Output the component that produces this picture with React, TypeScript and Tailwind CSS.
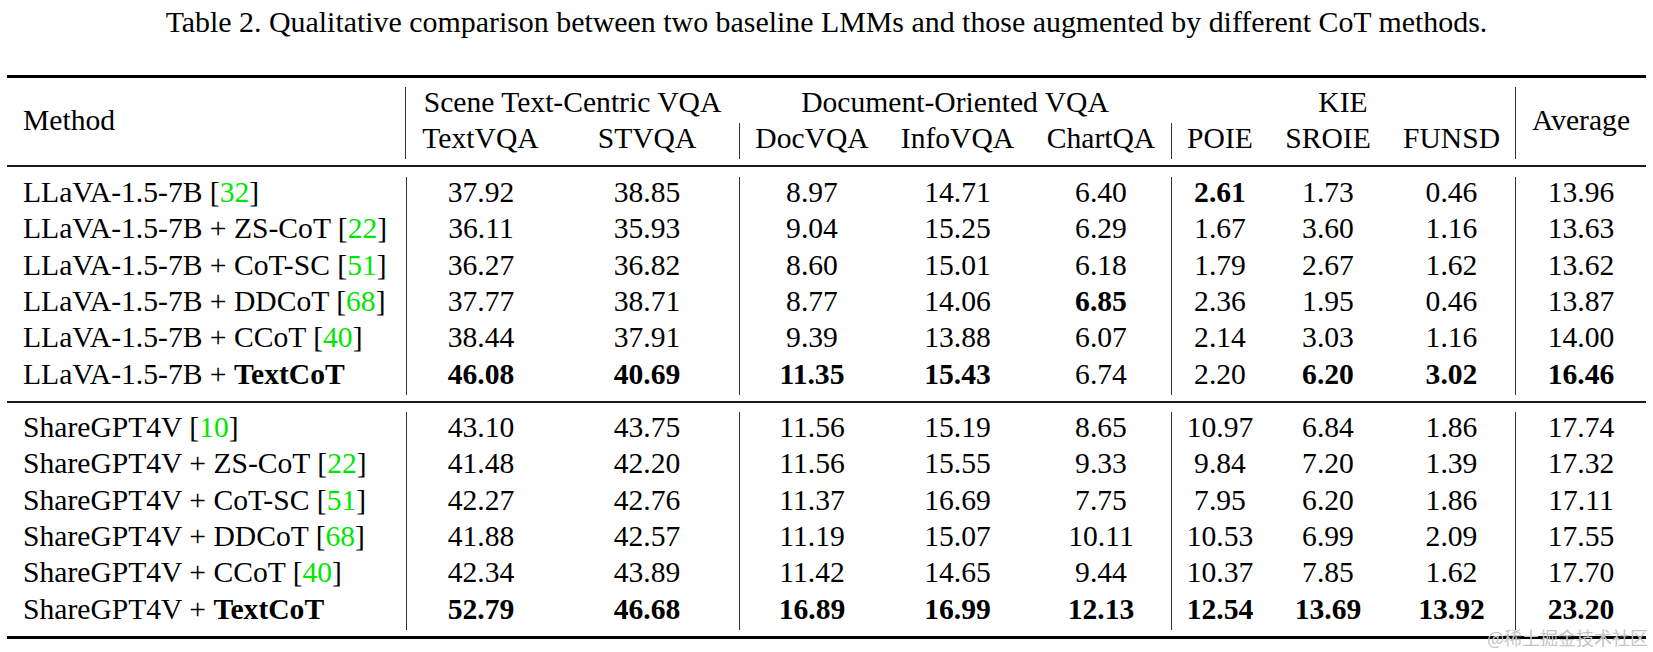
type Cell = string | { v: string; b?: boolean };

type Row = {
  base: string;
  plus?: string;
  cite?: string;
  boldName?: boolean;
  vals: Cell[];
};

const b = (v: string) => ({ v, b: true });

const llava: Row[] = [
  { base: 'LLaVA-1.5-7B', cite: '32', vals: ['37.92', '38.85', '8.97', '14.71', '6.40', b('2.61'), '1.73', '0.46', '13.96'] },
  { base: 'LLaVA-1.5-7B', plus: 'ZS-CoT', cite: '22', vals: ['36.11', '35.93', '9.04', '15.25', '6.29', '1.67', '3.60', '1.16', '13.63'] },
  { base: 'LLaVA-1.5-7B', plus: 'CoT-SC', cite: '51', vals: ['36.27', '36.82', '8.60', '15.01', '6.18', '1.79', '2.67', '1.62', '13.62'] },
  { base: 'LLaVA-1.5-7B', plus: 'DDCoT', cite: '68', vals: ['37.77', '38.71', '8.77', '14.06', b('6.85'), '2.36', '1.95', '0.46', '13.87'] },
  { base: 'LLaVA-1.5-7B', plus: 'CCoT', cite: '40', vals: ['38.44', '37.91', '9.39', '13.88', '6.07', '2.14', '3.03', '1.16', '14.00'] },
  {
    base: 'LLaVA-1.5-7B',
    plus: 'TextCoT',
    boldName: true,
    vals: [b('46.08'), b('40.69'), b('11.35'), b('15.43'), '6.74', '2.20', b('6.20'), b('3.02'), b('16.46')],
  },
];

const share: Row[] = [
  { base: 'ShareGPT4V', cite: '10', vals: ['43.10', '43.75', '11.56', '15.19', '8.65', '10.97', '6.84', '1.86', '17.74'] },
  { base: 'ShareGPT4V', plus: 'ZS-CoT', cite: '22', vals: ['41.48', '42.20', '11.56', '15.55', '9.33', '9.84', '7.20', '1.39', '17.32'] },
  { base: 'ShareGPT4V', plus: 'CoT-SC', cite: '51', vals: ['42.27', '42.76', '11.37', '16.69', '7.75', '7.95', '6.20', '1.86', '17.11'] },
  { base: 'ShareGPT4V', plus: 'DDCoT', cite: '68', vals: ['41.88', '42.57', '11.19', '15.07', '10.11', '10.53', '6.99', '2.09', '17.55'] },
  { base: 'ShareGPT4V', plus: 'CCoT', cite: '40', vals: ['42.34', '43.89', '11.42', '14.65', '9.44', '10.37', '7.85', '1.62', '17.70'] },
  {
    base: 'ShareGPT4V',
    plus: 'TextCoT',
    boldName: true,
    vals: [b('52.79'), b('46.68'), b('16.89'), b('16.99'), b('12.13'), b('12.54'), b('13.69'), b('13.92'), b('23.20')],
  },
];

// colonne che iniziano con il filetto verticale (indice nei valori)
const divided = [0, 2, 5, 8];

const grid =
  'grid grid-cols-[399px_149px_184px_145px_147px_140px_97px_120px_127px_131px]';

function MethodName({ row }: { row: Row }) {
  return (
    <div className="h-[36.33px] leading-[30px] pl-[16px] text-left whitespace-nowrap">
      {row.base}
      {row.plus && (
        <>
          {' + '}
          <span className={row.boldName ? 'font-bold' : ''}>{row.plus}</span>
        </>
      )}
      {row.cite && (
        <>
          {' ['}
          <span className="text-[#00e600]">{row.cite}</span>
          {']'}
        </>
      )}
    </div>
  );
}

function Block({ rows, last }: { rows: Row[]; last?: boolean }) {
  return (
    <div
      className={
        last
          ? 'pt-[9px] pb-[6px] border-b-[3px] border-black'
          : 'pt-[10px] pb-[6px] border-b-2 border-[#1a1a1a]'
      }
    >
      {rows.map((row, i) => (
        <div key={i} className={grid}>
          <MethodName row={row} />
          {row.vals.map((c, j) => {
            const cell = typeof c === 'string' ? { v: c } : c;
            return (
              <div
                key={j}
                className={`h-[36.33px] leading-[30px] text-center ${cell.b ? 'font-bold' : ''} ${
                  divided.includes(j) ? 'border-l border-[#333]' : ''
                }`}
              >
                {cell.v}
              </div>
            );
          })}
        </div>
      ))}
    </div>
  );
}

function Header() {
  return (
    <div className="pt-[9px] pb-[6px] border-b-2 border-[#1a1a1a]">
      <div className={`${grid} grid-rows-[36px_36px]`}>
        <div className="row-span-2 flex items-center pl-[16px] pb-[6px] leading-[30px] border-r border-[#333]">
          Method
        </div>
        <div className="col-span-2 leading-[30px] text-center">Scene Text-Centric VQA</div>
        <div className="col-span-3 leading-[30px] text-center">Document-Oriented VQA</div>
        <div className="col-span-3 leading-[30px] text-center">KIE</div>
        <div className="row-span-2 flex items-center justify-center pb-[6px] leading-[30px] border-l border-[#333]">
          Average
        </div>
        <div className="leading-[30px] text-center">TextVQA</div>
        <div className="leading-[30px] text-center">STVQA</div>
        <div className="leading-[30px] text-center border-l border-[#333]">DocVQA</div>
        <div className="leading-[30px] text-center">InfoVQA</div>
        <div className="leading-[30px] text-center">ChartQA</div>
        <div className="leading-[30px] text-center border-l border-[#333]">POIE</div>
        <div className="leading-[30px] text-center">SROIE</div>
        <div className="leading-[30px] text-center">FUNSD</div>
      </div>
    </div>
  );
}

export default function App() {
  return (
    <div className="relative w-[1653px] h-[652px] overflow-hidden bg-white text-black font-['Liberation_Serif','Times_New_Roman',serif]">
      <div className="pt-[4px] text-center text-[29.9px] leading-[36px]">
        Table 2. Qualitative comparison between two baseline LMMs and those augmented by different CoT methods.
      </div>

      <div className="mx-auto mt-[35px] w-[1639px] border-t-[3px] border-black text-[29.6px]">
        <Header />
        <Block rows={llava} />
        <Block rows={share} last />
      </div>

      {/* watermark */}
      <div className="absolute left-[1487px] top-[628px] text-[18px] leading-[18px] text-[#c4c4c4] whitespace-nowrap font-['Noto_Sans_CJK_SC','Noto_Sans',sans-serif]">
        @稀土掘金技术社区
      </div>
    </div>
  );
}
